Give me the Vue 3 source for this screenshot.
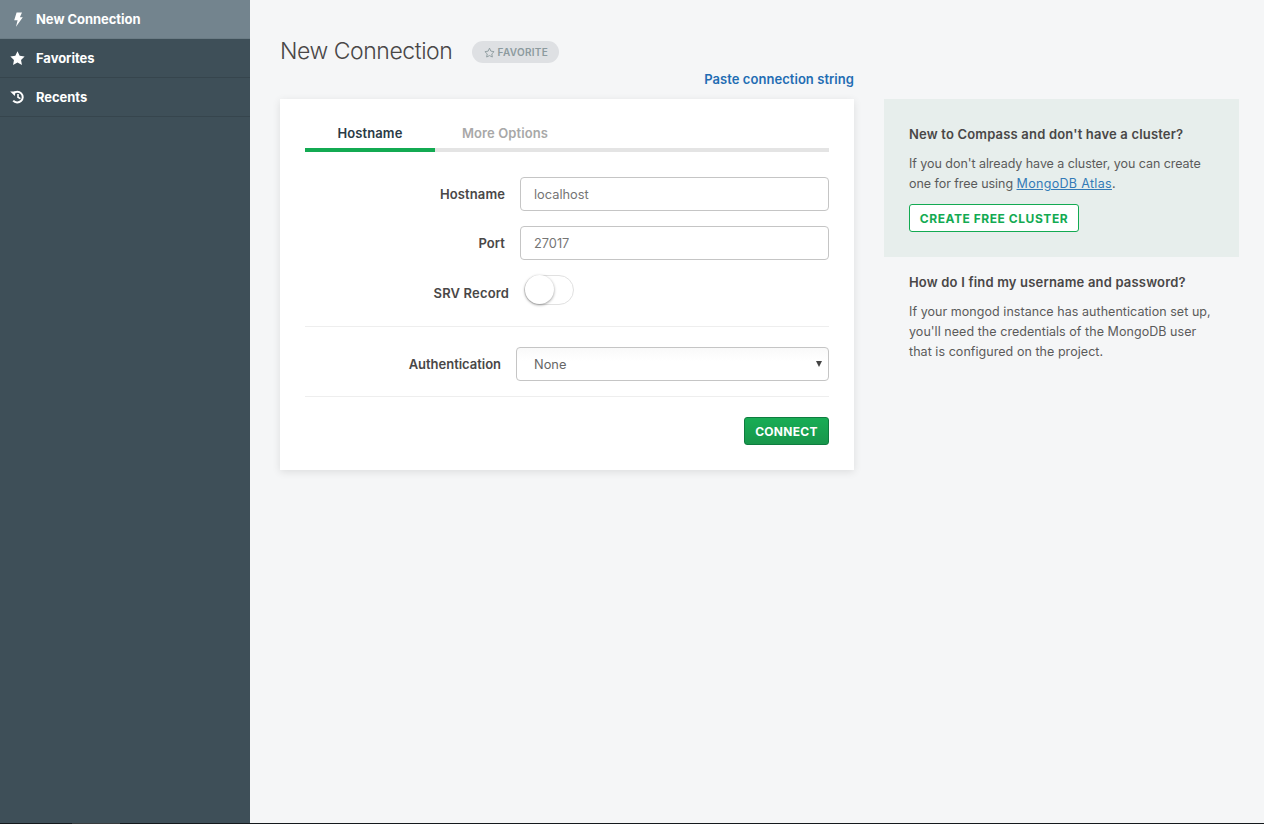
<script setup>
const navItems = [
  { label: 'New Connection', icon: 'bolt', active: true },
  { label: 'Favorites', icon: 'star', active: false },
  { label: 'Recents', icon: 'history', active: false }
]
</script>

<template>
  <div class="page">
    <div class="shell">
      <aside class="sidebar">
        <div v-for="item in navItems" :key="item.label" class="nav-item" :class="{ active: item.active }">
          <span class="nav-icon">
            <svg v-if="item.icon === 'bolt'" width="10" height="15" viewBox="0 0 10 15"><path d="M3.6 0.5H9L6.9 5.2H9.8L3 14.8L4.6 8.2H1.2Z" fill="#fff"/></svg>
            <svg v-else-if="item.icon === 'star'" width="15" height="14" viewBox="0 0 24 23"><path d="M12 0.5L15.6 7.9L23.7 9L17.8 14.7L19.3 22.8L12 19L4.7 22.8L6.2 14.7L0.3 9L8.4 7.9Z" fill="#fff"/></svg>
            <svg v-else width="15" height="14" viewBox="0 0 15 14" fill="none" stroke="#fff"><path d="M3.4 3.4A5.4 5.4 0 1 1 3.2 10.6" stroke-width="2"/><path d="M0.2 1.4L5.6 1.4L4.8 6Z" fill="#fff" stroke="none"/><path d="M8 4V7.2L10.4 8.6" stroke-width="1.6"/></svg>
          </span>
          <span>{{ item.label }}</span>
        </div>
      </aside>

      <main class="main">
        <header class="title-row">
          <h1>New Connection</h1>
          <span class="favorite">
            <svg width="11" height="11" viewBox="0 0 24 23" fill="none" stroke="#8c9a9e" stroke-width="2"><path d="M12 2L15 8.6L22 9.6L17 14.6L18.2 21.4L12 18.2L5.8 21.4L7 14.6L2 9.6L9 8.6Z"/></svg>
            FAVORITE
          </span>
        </header>
        <div class="paste-row"><a class="paste">Paste connection string</a></div>

        <div class="columns">
          <section class="card">
            <div class="tabs">
              <div class="tab current">Hostname</div>
              <div class="tab">More Options</div>
            </div>

            <div class="field first">
              <label>Hostname</label>
              <div class="input">localhost</div>
            </div>
            <div class="field second">
              <label>Port</label>
              <div class="input">27017</div>
            </div>
            <div class="field srv">
              <label>SRV Record</label>
              <div class="toggle"><span class="knob"></span></div>
            </div>

            <hr class="divider" />

            <div class="field auth">
              <label>Authentication</label>
              <div class="select">None<span class="caret"></span></div>
            </div>

            <hr class="divider lower" />

            <div class="actions"><button class="connect">CONNECT</button></div>
          </section>

          <aside class="help">
            <div class="help-box">
              <h2>New to Compass and don't have a cluster?</h2>
              <p>If you don't already have a cluster, you can create one for free using <a class="atlas">MongoDB Atlas</a>.</p>
              <button class="create">CREATE FREE CLUSTER</button>
            </div>
            <div class="help-plain">
              <h2>How do I find my username and password?</h2>
              <p>If your mongod instance has authentication set up, you'll need the credentials of the MongoDB user that is configured on the project.</p>
            </div>
          </aside>
        </div>
      </main>
    </div>
    <div class="bottom-line"><span class="bottom-seg"></span></div>
  </div>
</template>

<style scoped>
.page {
  width: 1264px;
  height: 824px;
  display: flex;
  flex-direction: column;
  overflow: hidden;
  font-family: Inter, "Liberation Sans", sans-serif;
  color: #494747;
  background: #f5f6f7;
}
.shell { flex: 1; display: flex; min-height: 0; }
.bottom-line { height: 1px; background: #14191c; padding-left: 72px; }
.bottom-seg { display: block; width: 48px; height: 1px; background: #383c3e; }

.sidebar { width: 250px; background: #3e4f58; flex: none; }
.nav-item {
  height: 38px;
  border-bottom: 1px solid #36454d;
  display: flex;
  align-items: center;
  color: #fff;
  font-size: 13px;
  font-weight: 700;
  letter-spacing: -0.05px;
}
.nav-item.active { background: #73848e; border-bottom-color: #6b7c85; }
.nav-icon { width: 36px; padding-left: 10px; box-sizing: border-box; display: flex; justify-content: flex-start; }
.nav-item:first-child .nav-icon { padding-left: 13px; }

.main { flex: 1; padding: 0 25px 0 30px; min-width: 0; }
.title-row { display: flex; align-items: center; height: 24px; padding-top: 40px; }
h1 { margin: 0 0 2px; font-size: 23px; font-weight: 300; line-height: 24px; color: #494747; letter-spacing: -0.45px; }
.favorite {
  margin-left: 20px;
  width: 87px;
  height: 22px;
  border-radius: 11px;
  background: #dee0e3;
  color: #8c9a9e;
  font-size: 10px;
  font-weight: 600;
  letter-spacing: 0.3px;
  display: flex;
  align-items: center;
  justify-content: center;
  gap: 3px;
}
.paste-row { width: 574px; display: flex; justify-content: flex-end; height: 30px; align-items: center; margin-bottom: 5px; }
.paste { color: #1f6db3; font-size: 13px; font-weight: 600; letter-spacing: 0.05px; }

.columns { display: flex; gap: 30px; align-items: flex-start; }
.card {
  width: 574px;
  height: 371px;
  box-sizing: border-box;
  background: #fff;
  box-shadow: 0 2px 8px rgba(0, 0, 0, 0.1);
  padding: 0 25px;
}
.tabs { display: flex; height: 49px; border-bottom: 4px solid #e4e4e4; margin-bottom: 25px; }
.tab {
  width: 130px;
  font-size: 13px;
  font-weight: 600;
  letter-spacing: 0.1px;
  color: #a8a8a8;
  text-align: center;
  padding-top: 26px;
  box-sizing: border-box;
  line-height: 16px;
  height: 53px;
  border-bottom: 4px solid transparent;
}
.tab + .tab { width: 140px; }
.tab.current { color: #2a3a45; border-bottom-color: #13aa52; }

.field { display: flex; align-items: center; }
.field label { width: 200px; text-align: right; font-size: 13px; font-weight: 600; letter-spacing: 0.1px; color: #494747; }
.second { margin-top: 15px; }
.srv { margin-top: 15px; height: 30px; }
.srv label { width: 204px; position: relative; top: 3px; letter-spacing: 0.15px; }
.input {
  margin-left: 15px;
  width: 309px;
  height: 34px;
  box-sizing: border-box;
  border: 1px solid #c5c5c5;
  border-radius: 4px;
  padding: 0 13px;
  display: flex;
  align-items: center;
  font-size: 12.8px;
  color: #757575;
}
.toggle {
  position: relative;
  margin-left: 15px;
  width: 50px;
  height: 30px;
  box-sizing: border-box;
  border: 1px solid #e1e1e1;
  border-radius: 15px;
  background: #fff;
}
.knob {
  position: absolute;
  left: 0;
  top: -1px;
  width: 29px;
  height: 29px;
  border-radius: 50%;
  background: #fff;
  box-shadow: 0 1px 3px rgba(0, 0, 0, 0.4);
}
.divider { border: 0; height: 1px; background: #eeeeee; margin: 21px 0 20px; }
.divider.lower { margin: 15px 0 20px; }
.auth label { width: 196px; letter-spacing: -0.02px; }
.select {
  position: relative;
  margin-left: 15px;
  width: 313px;
  height: 34px;
  box-sizing: border-box;
  border: 1px solid #c5c5c5;
  border-radius: 4px;
  padding: 0 17px;
  display: flex;
  align-items: center;
  font-size: 12.8px;
  color: #666;
  background: linear-gradient(#f9f9f9, #fff 40%);
}
.caret {
  position: absolute;
  right: 6px;
  top: 13px;
  border-left: 3px solid transparent;
  border-right: 3px solid transparent;
  border-top: 6px solid #444;
}
.actions { display: flex; justify-content: flex-end; }
.connect {
  width: 85px;
  height: 28px;
  border: 1px solid #0e7c3f;
  border-radius: 3px;
  background: linear-gradient(#18ad55, #18964b);
  color: #fff;
  font-family: inherit;
  font-size: 12px;
  font-weight: 700;
  letter-spacing: 0.3px;
  padding: 0;
}

.help { width: 355px; flex: none; font-size: 12.5px; }
.help-box { background: #e7eeec; height: 158px; box-sizing: border-box; padding: 27px 25px 0; }
.help-plain { padding: 17px 25px 0; }
h2 { margin: 0; font-size: 13px; font-weight: 600; line-height: 17px; color: #494747; letter-spacing: 0.18px; }
.help p { margin: 11px 0 0; line-height: 20px; color: #5b5b5b; font-size: 12.5px; letter-spacing: -0.05px; }
.help-plain p { letter-spacing: 0.05px; }
.atlas { color: #337ab7; text-decoration: underline; letter-spacing: 0.33px; }
.create {
  display: block;
  margin-top: 10px;
  width: 170px;
  height: 28px;
  box-sizing: border-box;
  border: 1px solid #13aa52;
  border-radius: 3px;
  background: #fff;
  color: #13aa52;
  font-family: inherit;
  font-size: 12px;
  font-weight: 700;
  letter-spacing: 0.55px;
  padding: 0;
}
</style>
